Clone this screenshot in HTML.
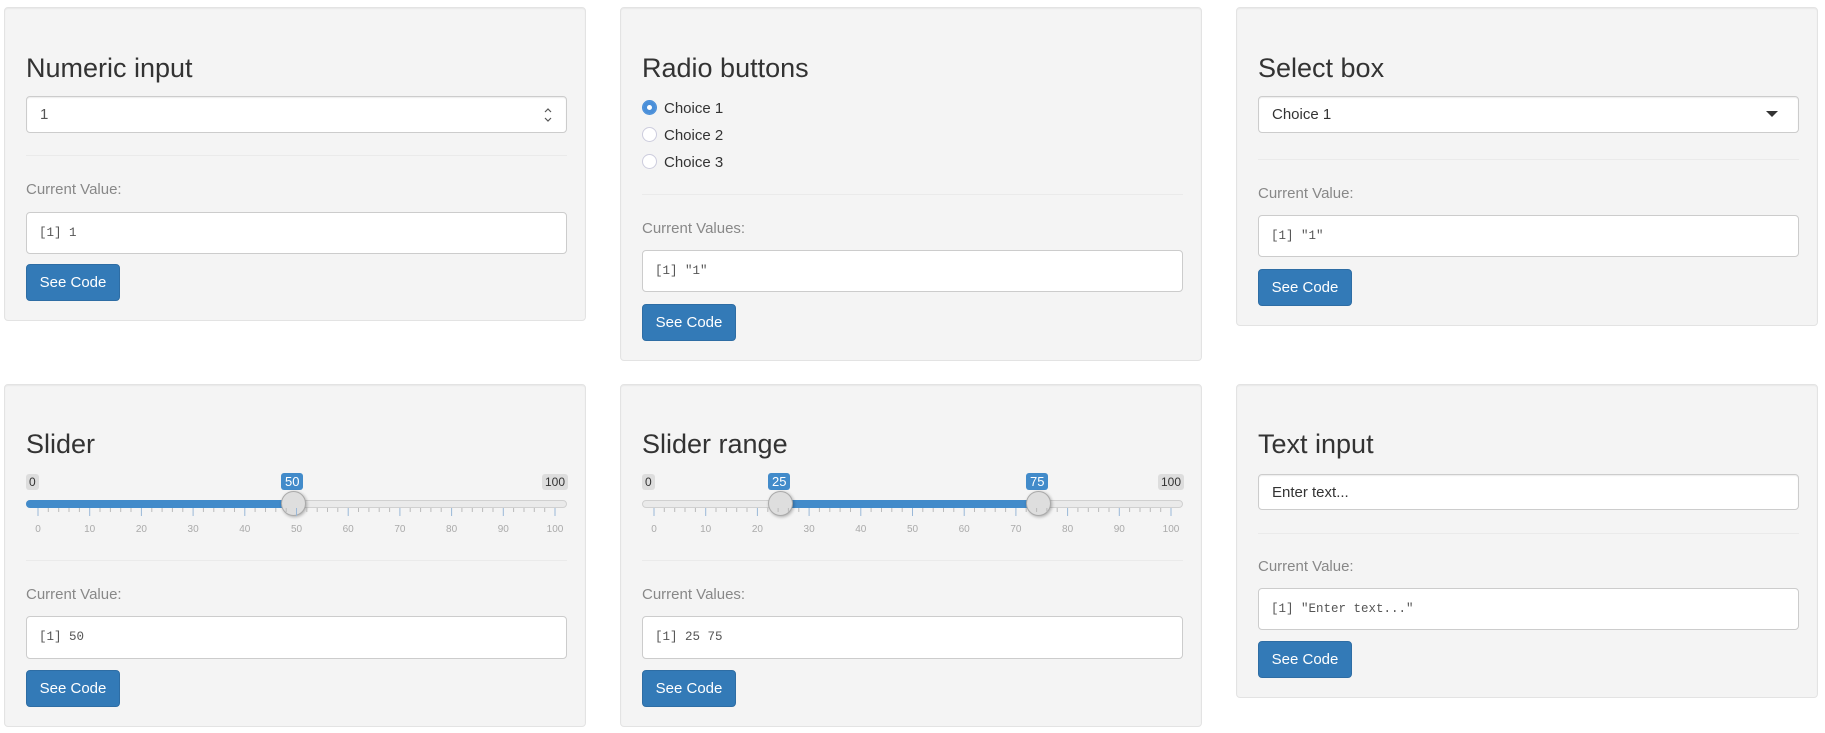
<!DOCTYPE html>
<html><head><meta charset="utf-8"><style>
*{box-sizing:border-box;margin:0;padding:0}
body{width:1825px;height:733px;background:#fff;font-family:"Liberation Sans",Arial,sans-serif;color:#333;position:relative;overflow:hidden}
.p{position:absolute;background:#f4f4f4;border:1px solid #e3e3e3;border-radius:4px;box-shadow:inset 0 1px 1px rgba(0,0,0,.05);width:582px}
.p>*{position:absolute}
.t{left:21px;font-size:27px;line-height:32px;color:#333;font-weight:400}
.in{left:21px;width:541px;background:#fff;border:1px solid #ccc;border-radius:4px;font-size:15px;line-height:35px;padding-left:13px;color:#555;box-shadow:inset 0 1px 1px rgba(0,0,0,.075)}
.hr{left:21px;width:541px;height:1px;background:#eaeaea}
.lb{left:21px;font-size:15px;color:#888;line-height:18px}
.out{left:21px;width:541px;background:#fff;border:1px solid #ccc;border-radius:4px;font-family:"Liberation Mono",monospace;font-size:12.5px;color:#555;padding-left:12px;line-height:40px}
.btn{left:21px;width:94px;background:#337ab7;border:1px solid #2e6da4;border-radius:4px;color:#fff;font-size:15px;text-align:center;line-height:35px}
.rad{left:21px;font-size:15px;color:#333;line-height:20px}
.rad i{display:inline-block;width:15px;height:15px;border:1px solid #ccd;border-radius:50%;background:#fff;vertical-align:-2px;margin-right:7px}
.rad i.on{background:#4a8fd9;border-color:#4a8fd9;box-shadow:inset 0 0 0 4px #4a8fd9,inset 0 0 0 8px #fff}
.track{left:21px;width:541px;height:8px;background:#eaeaea;border:1px solid #d0d0d0;border-radius:5px}
.bar{height:8px;background:#428bca}
.h{width:25px;height:25px;border-radius:50%;background:#dedede;border:1px solid #aaa;box-shadow:1px 1px 3px rgba(0,0,0,.3)}
.mm{font-size:12px;background:#ddd;color:#333;border-radius:3px;padding:1px 3px;line-height:14px}
.val{font-size:13px;background:#428bca;color:#fff;border-radius:3px;padding:1px 4px;line-height:15px}
</style></head><body>

<div class="p" style="left:4px;top:7px;height:314px">
 <div class="t" style="top:44px">Numeric input</div>
 <div class="in" style="top:88px;height:37px">1<svg style="position:absolute;right:14px;top:10px" width="8" height="16" viewBox="0 0 8 16"><path d="M1 5 L4 2 L7 5 M1 11 L4 14 L7 11" stroke="#555" fill="none" stroke-width="1.2"/></svg></div>
 <div class="hr" style="top:147px"></div>
 <div class="lb" style="top:173px">Current Value:</div>
 <div class="out" style="top:204px;height:42px">[1] 1</div>
 <div class="btn" style="top:256px;height:37px">See Code</div>
</div>

<div class="p" style="left:620px;top:7px;height:354px">
 <div class="t" style="top:44px">Radio buttons</div>
 <div class="rad" style="top:91px"><i class="on"></i>Choice 1</div>
 <div class="rad" style="top:118px"><i></i>Choice 2</div>
 <div class="rad" style="top:145px"><i></i>Choice 3</div>
 <div class="hr" style="top:186px"></div>
 <div class="lb" style="top:212px">Current Values:</div>
 <div class="out" style="top:242px;height:42px">[1] "1"</div>
 <div class="btn" style="top:296px;height:37px">See Code</div>
</div>

<div class="p" style="left:1236px;top:7px;height:319px">
 <div class="t" style="top:44px">Select box</div>
 <div class="in" style="top:88px;height:37px;color:#333">Choice 1<svg style="position:absolute;right:20px;top:14px" width="12" height="7"><path d="M0 0H12L6 6Z" fill="#333"/></svg></div>
 <div class="hr" style="top:151px"></div>
 <div class="lb" style="top:177px">Current Value:</div>
 <div class="out" style="top:207px;height:42px">[1] "1"</div>
 <div class="btn" style="top:261px;height:37px">See Code</div>
</div>

<div class="p" style="left:4px;top:384px;height:343px">
 <div class="t" style="top:43px">Slider</div>
 <div class="mm" style="left:21px;top:89px">0</div>
 <div class="mm" style="left:537px;top:89px">100</div>
 <div class="val" style="left:276px;top:88px">50</div>
 <div class="track" style="top:115px"><div class="bar" style="width:270px;margin:-1px 0 0 -1px;border-radius:5px 0 0 5px"></div></div>
 <div class="h" style="left:276px;top:106px"></div>
 <svg style="left:21px;top:123px" width="545" height="30">
  <g stroke="#9ab8d8"><path d="M12 0v8M63.7 0v8M115.4 0v8M167.1 0v8M218.8 0v8M270.5 0v8M322.2 0v8M373.9 0v8M425.6 0v8M477.3 0v8M529 0v8"/></g>
  <g stroke="#bbb"><path d="M22.3 0v4M32.7 0v4M43 0v4M53.4 0v4M74 0v4M84.4 0v4M94.7 0v4M105 0v4M125.8 0v4M136.1 0v4M146.4 0v4M156.8 0v4M177.4 0v4M187.8 0v4M198.1 0v4M208.5 0v4M229.1 0v4M239.5 0v4M249.8 0v4M260.2 0v4M280.8 0v4M291.2 0v4M301.5 0v4M311.8 0v4M332.5 0v4M342.9 0v4M353.2 0v4M363.6 0v4M384.2 0v4M394.6 0v4M404.9 0v4M415.2 0v4M435.9 0v4M446.3 0v4M456.6 0v4M467 0v4M487.6 0v4M498 0v4M508.3 0v4M518.7 0v4"/></g>
  <g font-size="10" fill="#aaa" text-anchor="middle" font-family="Liberation Sans"><text x="12" y="24">0</text><text x="63.7" y="24">10</text><text x="115.4" y="24">20</text><text x="167.1" y="24">30</text><text x="218.8" y="24">40</text><text x="270.5" y="24">50</text><text x="322.2" y="24">60</text><text x="373.9" y="24">70</text><text x="425.6" y="24">80</text><text x="477.3" y="24">90</text><text x="529" y="24">100</text></g>
 </svg>
 <div class="hr" style="top:175px"></div>
 <div class="lb" style="top:201px">Current Value:</div>
 <div class="out" style="top:231px;height:43px">[1] 50</div>
 <div class="btn" style="top:285px;height:37px">See Code</div>
</div>

<div class="p" style="left:620px;top:384px;height:343px">
 <div class="t" style="top:43px">Slider range</div>
 <div class="mm" style="left:21px;top:89px">0</div>
 <div class="mm" style="left:537px;top:89px">100</div>
 <div class="val" style="left:147px;top:88px">25</div>
 <div class="val" style="left:405px;top:88px">75</div>
 <div class="track" style="top:115px"><div class="bar" style="width:258px;margin:-1px 0 0 141px"></div></div>
 <div class="h" style="left:147px;top:106px"></div>
 <div class="h" style="left:405px;top:106px"></div>
 <svg style="left:21px;top:123px" width="545" height="30">
  <g stroke="#9ab8d8"><path d="M12 0v8M63.7 0v8M115.4 0v8M167.1 0v8M218.8 0v8M270.5 0v8M322.2 0v8M373.9 0v8M425.6 0v8M477.3 0v8M529 0v8"/></g>
  <g stroke="#bbb"><path d="M22.3 0v4M32.7 0v4M43 0v4M53.4 0v4M74 0v4M84.4 0v4M94.7 0v4M105 0v4M125.8 0v4M136.1 0v4M146.4 0v4M156.8 0v4M177.4 0v4M187.8 0v4M198.1 0v4M208.5 0v4M229.1 0v4M239.5 0v4M249.8 0v4M260.2 0v4M280.8 0v4M291.2 0v4M301.5 0v4M311.8 0v4M332.5 0v4M342.9 0v4M353.2 0v4M363.6 0v4M384.2 0v4M394.6 0v4M404.9 0v4M415.2 0v4M435.9 0v4M446.3 0v4M456.6 0v4M467 0v4M487.6 0v4M498 0v4M508.3 0v4M518.7 0v4"/></g>
  <g font-size="10" fill="#aaa" text-anchor="middle" font-family="Liberation Sans"><text x="12" y="24">0</text><text x="63.7" y="24">10</text><text x="115.4" y="24">20</text><text x="167.1" y="24">30</text><text x="218.8" y="24">40</text><text x="270.5" y="24">50</text><text x="322.2" y="24">60</text><text x="373.9" y="24">70</text><text x="425.6" y="24">80</text><text x="477.3" y="24">90</text><text x="529" y="24">100</text></g>
 </svg>
 <div class="hr" style="top:175px"></div>
 <div class="lb" style="top:201px">Current Values:</div>
 <div class="out" style="top:231px;height:43px">[1] 25 75</div>
 <div class="btn" style="top:285px;height:37px">See Code</div>
</div>

<div class="p" style="left:1236px;top:384px;height:314px">
 <div class="t" style="top:43px">Text input</div>
 <div class="in" style="top:89px;height:36px;color:#333">Enter text...</div>
 <div class="hr" style="top:148px"></div>
 <div class="lb" style="top:173px">Current Value:</div>
 <div class="out" style="top:203px;height:42px">[1] "Enter text..."</div>
 <div class="btn" style="top:256px;height:37px">See Code</div>
</div>

</body></html>
